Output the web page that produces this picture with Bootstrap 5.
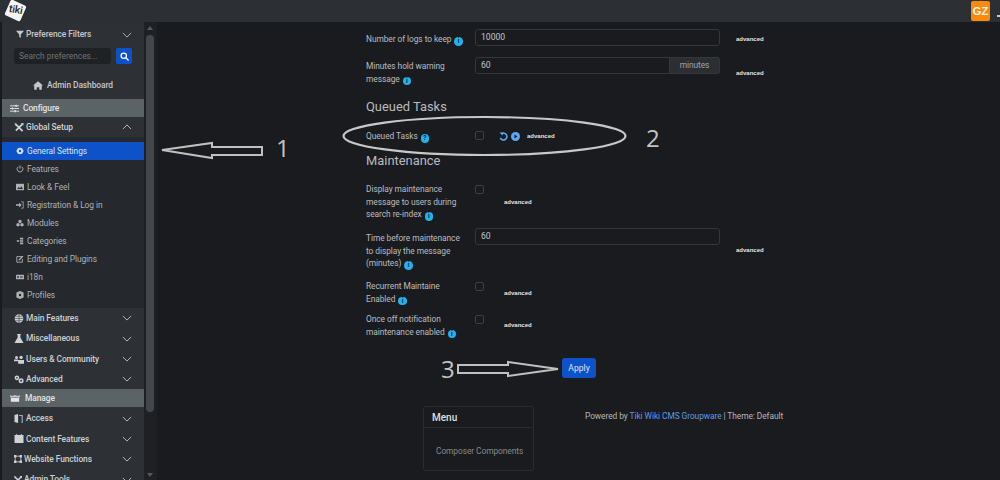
<!doctype html>
<html lang="en" data-bs-theme="dark">
<head>
<meta charset="utf-8">
<title>Tiki admin</title>
<link href="https://cdn.jsdelivr.net/npm/bootstrap@5.3.0/dist/css/bootstrap.min.css" rel="stylesheet">
<style>
html,body{height:480px;overflow:hidden}
body{background:#191b1e;color:#b9bcc0;font-family:Roboto,"Liberation Sans",sans-serif;font-size:8.4px;letter-spacing:-.07px;position:relative}
svg{display:block;flex:none}
.top-strip{height:22px;background:#2c3034}
.logo-tile{position:relative;width:17px;height:17px;margin:2px 0 0 7px;background:#f4f4f4;border-radius:2px;transform:rotate(24deg);color:#222;font-size:10.5px;font-weight:500;line-height:16px;text-align:center;letter-spacing:-.2px}
.logo-word{display:block;transform:rotate(-14deg)}
.avatar-tile{width:19px;height:20px;margin:1px 0 0 0;background:#fb8b06;border-radius:2px;color:#f4f4f4;font-family:"Liberation Sans",sans-serif;font-size:11px;font-weight:700;line-height:20px;text-align:center;letter-spacing:0}
.caret-dot{width:3px;height:2px;background:#ccc;margin:15px 0 0 7px}
.below-top{height:458px}
.side-left{margin-left:2px;background:#2d3135;flex:none;width:142px;overflow:hidden;color:#c5c8cb}
.side-scroll{width:13px;flex:none;background:#1e2023;position:relative}
.scroll-thumb{width:8px;height:377px;background:#44484c;border-radius:4px;margin:13px 0 0 2px}
.tri-up,.tri-down{position:absolute;left:3px;width:0;height:0;border-left:3px solid transparent;border-right:3px solid transparent}
.tri-up{top:4px;border-bottom:4px solid #55595d}
.tri-down{bottom:3px;border-top:4px solid #55595d}
.filter-row{height:24px;padding:1px 12px 0 14px;font-weight:500}
.filter-label{gap:2px}
.search-row{height:20px;padding:2px 0 0 12px}
.search-box{width:97px;height:16px;background:#1f2225;border-radius:3px;color:#6f7377;font-size:8.4px;line-height:16px;padding:0 5px;border:0}
.search-box::placeholder{color:#6f7377;opacity:1}
.search-go{width:16px;height:16px;margin-left:5px;background:#0d52c9;border-radius:2px}
.dash-row{height:33px;padding:6px 0 0 31px;font-weight:500;gap:4px}
.band-row{height:18px;background:#5c6366;color:#e3e5e6;font-weight:500;padding-left:8px;gap:4px}
.band-gap{margin-bottom:1px}
.band-lead{gap:5px}
.group-row{height:20.3px;padding:0 12px;font-weight:500;color:#cfd2d4}
.group-row .group-label{gap:2px}
.sub-list{background:#25282c;padding:5px 0 4px;margin:0;list-style:none}
.sub-item{height:18px;padding-left:14px;gap:3px;color:#aeb2b6}
.sub-item.is-on{background:#0d52c9;color:#d8e4fa}
.main-pane{flex:1;min-width:0;padding:7px 0 0 209px;overflow:hidden}
.pref-label{width:109px;flex:none;line-height:12.5px;color:#b9bcc0;padding-right:12px}
.pref-field{width:245px;flex:none}
.tik-input{height:16.5px;background:#191b1e;border:1px solid #34383c;border-radius:3px;color:#c4c7ca;font-size:8.6px;line-height:14px;padding:0 5px;width:100%;display:block}
.tik-group{display:flex;align-items:flex-start}
.tik-group .tik-input{border-radius:3px 0 0 3px;width:195px;flex:none}
.tik-addon{flex:1;height:16.5px;background:#2b2f33;border:1px solid #34383c;border-left:0;border-radius:0 3px 3px 0;text-align:center;line-height:14px;color:#9fa3a7;font-size:8.4px}
.tik-check{width:9px;height:9px;border:1px solid #3c4044;border-radius:2px;background:#191b1e;flex:none;appearance:none;display:block;margin:0}
.adv-tag{font-family:"Liberation Sans",sans-serif;font-size:6px;font-weight:700;line-height:8px;color:#e4e5e6;letter-spacing:0}
.info-dot{display:inline-block;width:8.5px;height:8.5px;border-radius:50%;background:#20b2f2;color:#10222c;font-size:6.5px;font-weight:700;line-height:8.5px;text-align:center;vertical-align:-1px;margin-left:1px}
.sec-head{font-size:12.9px;font-weight:400;color:#b9bcc0;margin:0;letter-spacing:0}
.h-a{height:30px;line-height:31px;margin-bottom:9px}
.h-b{height:28px;line-height:29px;margin-bottom:9px}
.row-a{height:28px}.row-b{height:34px}.row-q{height:16px}.row-c{height:45px}.row-d{height:52px}.row-e{height:33px}.row-f{height:45px}
.pt-a{padding-top:4px}.pt-b{padding-top:3px}
.adv-far{margin:6px 0 0 16px}.adv-far2{margin:12px 0 0 16px}.adv-far3{margin:18px 0 0 16px}
.cb-t{margin-top:2px}.cb-q{margin-top:1px}
.adv-near{margin-left:20px}.adv-m1{margin-top:15px}.adv-m2{margin-top:9px}.adv-m3{margin-top:8px}
.queue-tools{margin-left:15px;gap:3px;height:12px}
.apply-wrap{padding-left:196px;height:48px}
.apply-btn{width:34px;height:20px;padding:0;background:#0d52c9;border:0;border-radius:3px;color:#dbe6fb;font-size:8.6px;line-height:20px}
.foot-row{margin-left:57px}
.menu-box{width:111px;height:65px;border:1px solid #2a2d30;border-radius:3px;flex:none}
.menu-head{height:21px;border-bottom:1px solid #2a2d30;padding-left:8px;font-size:10px;font-weight:500;line-height:21px;color:#dde0e2;letter-spacing:0}
.menu-link{padding:17px 0 0 12px;color:#85898d}
.powered{margin:4px 0 0 51px;color:#b4b7ba;white-space:nowrap}
.powered a{color:#5e9ae8;text-decoration:none}
.mark-layer{position:absolute;left:0;top:0;width:1000px;height:480px;pointer-events:none}
.mark-num{position:absolute;font-family:"Open Sans",sans-serif;font-size:24px;line-height:24px;color:#c4c4c4;letter-spacing:0}
.n-one{left:276px;top:136px}.n-two{left:646px;top:126px}.n-three{left:441px;top:357px}
</style>
</head>
<body>
<svg width="0" height="0" class="position-absolute">
  <defs>
    <symbol id="chev-d" viewBox="0 0 12 7"><path d="M1 1l5 5 5-5" fill="none" stroke="currentColor" stroke-width="1"/></symbol>
    <symbol id="chev-u" viewBox="0 0 12 7"><path d="M1 6l5-5 5 5" fill="none" stroke="currentColor" stroke-width="1"/></symbol>
    <symbol id="i-filter" viewBox="0 0 10 10"><path d="M0 1h10L6 5.500V10L4 8.500V5.500z" fill="currentColor"/></symbol>
    <symbol id="i-search" viewBox="0 0 10 10"><circle cx="4.200" cy="4.200" r="3" fill="none" stroke="currentColor" stroke-width="1.400"/><path d="M6.500 6.500l3 3" stroke="currentColor" stroke-width="1.500"/></symbol>
    <symbol id="i-home" viewBox="0 0 12 10"><path d="M6 0l6 5h-1.500v5H7.500V7h-3v3h-3V5H0z" fill="currentColor"/></symbol>
    <symbol id="i-sliders" viewBox="0 0 10 10"><path d="M0 2h10M0 5h10M0 8h10" stroke="currentColor"/><path d="M6 .8h1.500v2.400H6zM2 3.800h1.500v2.400H2zM5 6.800h1.500v2.400H5z" fill="currentColor"/></symbol>
    <symbol id="i-tools" viewBox="0 0 10 10"><path d="M1.500 1.500l7.500 7.500M8.500 1.500L1.500 8.500" stroke="currentColor" stroke-width="2"/><path d="M0 0l3 1-2 2zM7 0h3v3z" fill="currentColor"/></symbol>
    <symbol id="i-gear" viewBox="0 0 10 10"><path d="M5 .5l1 1.200 1.600-.4.400 1.600L9.500 4l-.7 1 .7 1-1.500 1.100-.4 1.600L6 8.300l-1 1.200-1-1.200-1.600.4L2 7.100.5 6l.7-1-.7-1L2 2.900l.4-1.600 1.600.4z" fill="currentColor"/><circle cx="5" cy="5" r="1.500" fill="#0d52c9"/></symbol>
    <symbol id="i-power" viewBox="0 0 10 10"><path d="M5 .5v4.200" stroke="currentColor" stroke-width="1.200"/><path d="M2.800 2.200a3.600 3.600 0 1 0 4.400 0" fill="none" stroke="currentColor" stroke-width="1.200"/></symbol>
    <symbol id="i-image" viewBox="0 0 10 10"><path d="M0 1h10v8H0z" fill="currentColor"/><path d="M1.500 7.500l2-2.500 1.500 1.500L7 4l1.500 3.500z" fill="#25282c"/></symbol>
    <symbol id="i-login" viewBox="0 0 10 10"><path d="M0 4h4V2l3 3-3 3V6H0z" fill="currentColor"/><path d="M6.500 1H9v8H6.500" fill="none" stroke="currentColor"/></symbol>
    <symbol id="i-cubes" viewBox="0 0 10 10"><path d="M5 1l2 1v2.200L5 5.200 3 4.200V2zM2.500 5l2 1v2.500l-2 1-2-1V6zM7.500 5l2 1v2.500l-2 1-2-1V6z" fill="currentColor"/></symbol>
    <symbol id="i-tree" viewBox="0 0 10 10"><path d="M5 1h4v2H5zM5 4h4v2H5zM5 7h4v2H5zM1 4h3v2H1z" fill="currentColor"/></symbol>
    <symbol id="i-edit" viewBox="0 0 10 10"><path d="M7.500 2H1v7h7V5" fill="none" stroke="currentColor" stroke-width="1.100"/><path d="M3.500 5.200L8 .8l1.200 1.200-4.500 4.500-1.500.3z" fill="currentColor"/></symbol>
    <symbol id="i-lang" viewBox="0 0 14 8"><rect width="14" height="8" rx="1" fill="currentColor"/><path d="M2 2.500h3v3H2zM7 2.500h5v1H7zM7 4.500h5v1H7z" fill="#25282c"/></symbol>
    <symbol id="i-box" viewBox="0 0 10 10"><path d="M5 0l4.500 2v6L5 10 .5 8V2z" fill="currentColor"/><circle cx="5" cy="5" r="1.500" fill="#25282c"/></symbol>
    <symbol id="i-globe" viewBox="0 0 10 10"><circle cx="5" cy="5" r="4.800" fill="currentColor"/><path d="M0 5h10M5 0v10M1 2.500h8M1 7.500h8" stroke="#2d3135" stroke-width=".6"/></symbol>
    <symbol id="i-flask" viewBox="0 0 10 10"><path d="M3 0h4v1H6.500v3L10 10H0l3.500-6V1H3z" fill="currentColor"/></symbol>
    <symbol id="i-users" viewBox="0 0 12 10"><circle cx="3" cy="2.500" r="1.800" fill="currentColor"/><circle cx="8.500" cy="2.500" r="2" fill="currentColor"/><path d="M0 5h5v2H0zM5 5.500h7V10H5z" fill="currentColor"/></symbol>
    <symbol id="i-gears" viewBox="0 0 12 10"><circle cx="3.500" cy="3" r="2.800" fill="currentColor"/><circle cx="3.500" cy="3" r="1" fill="#2d3135"/><circle cx="8.500" cy="6.500" r="3" fill="currentColor"/><circle cx="8.500" cy="6.500" r="1.100" fill="#2d3135"/></symbol>
    <symbol id="i-boxes" viewBox="0 0 12 10"><path d="M0 1l2.500 1L6 1l3.500 1L12 1l-1 3v5H1V4z" fill="currentColor"/><path d="M1.500 3.500h9" stroke="#5c6366"/></symbol>
    <symbol id="i-door" viewBox="0 0 10 10"><path d="M0 1l4-1v10L0 9zM5 1h4v9H8V2H5z" fill="currentColor"/></symbol>
    <symbol id="i-folder" viewBox="0 0 10 10"><path d="M2 0h1v1h4V0h1v1h2v9H0V1h2z" fill="currentColor"/></symbol>
    <symbol id="i-frame" viewBox="0 0 10 10"><path d="M1.500 1.500h7v7h-7z" fill="none" stroke="currentColor"/><path d="M0 0h3v3H0zM7 0h3v3H7zM0 7h3v3H0zM7 7h3v3H7z" fill="currentColor"/></symbol>
    <symbol id="i-info" viewBox="0 0 10 10"><circle cx="5" cy="5" r="5" fill="#5aa9f5"/><path d="M3.800 2.800L7.200 5 3.800 7.200z" fill="#191b1e"/></symbol>
  </defs>
</svg>

<header class="top-strip d-flex justify-content-between">
  <div class="logo-tile"><span class="logo-word">tiki</span></div>
  <div class="d-flex"><div class="avatar-tile">GZ</div><div class="caret-dot"></div></div>
</header>

<div class="below-top d-flex">
  <nav class="side-left">
    <div class="filter-row d-flex align-items-center justify-content-between">
      <span class="filter-label d-flex align-items-center"><svg width="8" height="8"><use href="#i-filter"/></svg>Preference Filters</span>
      <svg width="10" height="6"><use href="#chev-d"/></svg>
    </div>
    <form class="search-row d-flex">
      <input class="search-box" placeholder="Search preferences...">
      <div class="search-go d-flex align-items-center justify-content-center text-white"><svg width="9" height="9"><use href="#i-search"/></svg></div>
    </form>
    <div class="dash-row d-flex align-items-center"><svg width="10" height="9"><use href="#i-home"/></svg>Admin Dashboard</div>
    <div class="band-row d-flex align-items-center"><svg width="9" height="9"><use href="#i-sliders"/></svg>Configure</div>
    <div class="group-row d-flex align-items-center justify-content-between"><span class="group-label d-flex align-items-center"><svg width="10" height="9"><use href="#i-tools"/></svg>Global Setup</span><svg width="10" height="6"><use href="#chev-u"/></svg></div>
    <ul class="sub-list">
      <li class="sub-item is-on d-flex align-items-center"><svg width="8" height="8"><use href="#i-gear"/></svg>General Settings</li>
      <li class="sub-item d-flex align-items-center"><svg width="8" height="8"><use href="#i-power"/></svg>Features</li>
      <li class="sub-item d-flex align-items-center"><svg width="8" height="8"><use href="#i-image"/></svg>Look &amp; Feel</li>
      <li class="sub-item d-flex align-items-center"><svg width="8" height="8"><use href="#i-login"/></svg>Registration &amp; Log in</li>
      <li class="sub-item d-flex align-items-center"><svg width="8" height="8"><use href="#i-cubes"/></svg>Modules</li>
      <li class="sub-item d-flex align-items-center"><svg width="8" height="8"><use href="#i-tree"/></svg>Categories</li>
      <li class="sub-item d-flex align-items-center"><svg width="8" height="8"><use href="#i-edit"/></svg>Editing and Plugins</li>
      <li class="sub-item d-flex align-items-center"><svg width="8" height="6"><use href="#i-lang"/></svg>i18n</li>
      <li class="sub-item d-flex align-items-center"><svg width="8" height="8"><use href="#i-box"/></svg>Profiles</li>
    </ul>
    <div class="group-row d-flex align-items-center justify-content-between"><span class="group-label d-flex align-items-center"><svg width="10" height="9"><use href="#i-globe"/></svg>Main Features</span><svg width="10" height="6"><use href="#chev-d"/></svg></div>
    <div class="group-row d-flex align-items-center justify-content-between"><span class="group-label d-flex align-items-center"><svg width="10" height="9"><use href="#i-flask"/></svg>Miscellaneous</span><svg width="10" height="6"><use href="#chev-d"/></svg></div>
    <div class="group-row d-flex align-items-center justify-content-between"><span class="group-label d-flex align-items-center"><svg width="10" height="9"><use href="#i-users"/></svg>Users &amp; Community</span><svg width="10" height="6"><use href="#chev-d"/></svg></div>
    <div class="group-row d-flex align-items-center justify-content-between"><span class="group-label d-flex align-items-center"><svg width="10" height="9"><use href="#i-gears"/></svg>Advanced</span><svg width="10" height="6"><use href="#chev-d"/></svg></div>
    <div class="band-row band-gap band-lead d-flex align-items-center"><svg width="10" height="9"><use href="#i-boxes"/></svg>Manage</div>
    <div class="group-row d-flex align-items-center justify-content-between"><span class="group-label d-flex align-items-center"><svg width="10" height="9"><use href="#i-door"/></svg>Access</span><svg width="10" height="6"><use href="#chev-d"/></svg></div>
    <div class="group-row d-flex align-items-center justify-content-between"><span class="group-label d-flex align-items-center"><svg width="10" height="9"><use href="#i-folder"/></svg>Content Features</span><svg width="10" height="6"><use href="#chev-d"/></svg></div>
    <div class="group-row d-flex align-items-center justify-content-between"><span class="group-label d-flex align-items-center"><svg width="8" height="8"><use href="#i-frame"/></svg>Website Functions</span><svg width="10" height="6"><use href="#chev-d"/></svg></div>
    <div class="group-row d-flex align-items-center justify-content-between"><span class="group-label d-flex align-items-center"><svg width="8" height="8"><use href="#i-tools"/></svg>Admin Tools</span><svg width="10" height="6"><use href="#chev-d"/></svg></div>
  </nav>
  <div class="side-scroll"><div class="tri-up"></div><div class="scroll-thumb"></div><div class="tri-down"></div></div>

  <main class="main-pane">
    <div class="row-a d-flex">
      <div class="pref-label pt-a">Number of logs to keep <span class="info-dot">i</span></div>
      <div class="pref-field"><input class="tik-input" value="10000"></div>
      <div class="adv-tag adv-far">advanced</div>
    </div>
    <div class="row-b d-flex">
      <div class="pref-label pt-b">Minutes hold warning message <span class="info-dot">i</span></div>
      <div class="pref-field tik-group"><input class="tik-input" value="60"><div class="tik-addon">minutes</div></div>
      <div class="adv-tag adv-far2">advanced</div>
    </div>
    <h2 class="sec-head h-a">Queued Tasks</h2>
    <div class="row-q d-flex">
      <div class="pref-label">Queued Tasks <span class="info-dot">?</span></div>
      <input type="checkbox" class="tik-check cb-q">
      <div class="queue-tools d-flex align-items-center">
        <svg width="9" height="9" viewBox="0 0 10 10"><path d="M2.500 2.200A3.800 3.800 0 1 1 1.500 6.500" fill="none" stroke="#5aa9f5" stroke-width="1.700"/><path d="M.5 .5h3.500v3.500z" fill="#5aa9f5"/></svg>
        <svg width="9" height="9"><use href="#i-info"/></svg>
        <div class="adv-tag ms-1">advanced</div>
      </div>
    </div>
    <h2 class="sec-head h-b">Maintenance</h2>
    <div class="row-c d-flex">
      <div class="pref-label">Display maintenance message to users during search re-index <span class="info-dot">i</span></div>
      <input type="checkbox" class="tik-check cb-t">
      <div class="adv-tag adv-near adv-m1">advanced</div>
    </div>
    <div class="row-d d-flex">
      <div class="pref-label pt-a">Time before maintenance to display the message (minutes) <span class="info-dot">i</span></div>
      <div class="pref-field"><input class="tik-input" value="60"></div>
      <div class="adv-tag adv-far3">advanced</div>
    </div>
    <div class="row-e d-flex">
      <div class="pref-label">Recurrent Maintaine Enabled <span class="info-dot">i</span></div>
      <input type="checkbox" class="tik-check cb-t">
      <div class="adv-tag adv-near adv-m2">advanced</div>
    </div>
    <div class="row-f d-flex">
      <div class="pref-label">Once off notification maintenance enabled <span class="info-dot">i</span></div>
      <input type="checkbox" class="tik-check cb-t">
      <div class="adv-tag adv-near adv-m3">advanced</div>
    </div>
    <div class="apply-wrap"><button type="button" class="btn apply-btn">Apply</button></div>
    <div class="foot-row d-flex">
      <section class="menu-box">
        <div class="menu-head">Menu</div>
        <div class="menu-link">Composer Components</div>
      </section>
      <div class="powered">Powered by <a href="#">Tiki Wiki CMS Groupware</a> | Theme: Default</div>
    </div>
  </main>
</div>

<svg class="mark-layer" viewBox="0 0 1000 480">
  <ellipse cx="484.500" cy="136" rx="141" ry="19" fill="none" stroke="#c8c8c8" stroke-width="2.200"/>
  <path d="M162 150l50-7v4h50v8h-50v3z" fill="#191b1e" stroke="#c0c0c0" stroke-width="2"/>
  <path d="M558 369l-50-7v3h-50v8h50v3z" fill="#191b1e" stroke="#c0c0c0" stroke-width="2"/>
</svg>
<div class="mark-num n-one">1</div>
<div class="mark-num n-two">2</div>
<div class="mark-num n-three">3</div>
</body>
</html>
